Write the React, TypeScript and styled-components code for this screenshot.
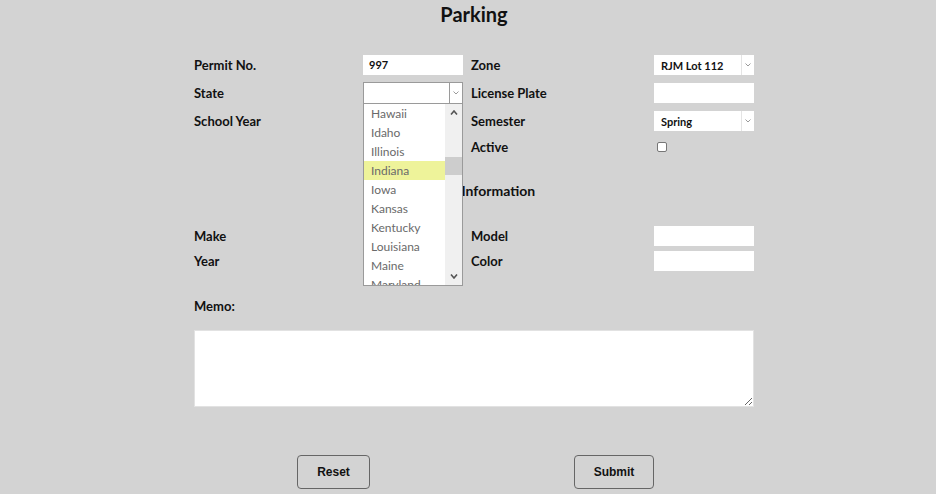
import React from "react";
import styled, { createGlobalStyle } from "styled-components";

const GlobalStyle = createGlobalStyle`
  html, body {
    margin: 0;
    padding: 0;
    background: #d3d3d3;
    font-family: "Lato", "Open Sans", sans-serif;
    color: #111;
  }
`;

const Page = styled.div`
  width: 936px;
  height: 494px;
  box-sizing: border-box;
  padding-left: 12px;
  display: flex;
  flex-direction: column;
  align-items: center;
  overflow: hidden;
`;

const Title = styled.h1`
  margin: 0;
  height: 28px;
  line-height: 28px;
  font-size: 20px;
  font-weight: 700;
`;

const Form = styled.div`
  width: 560px;
  margin-top: 23px;
  display: flex;
  flex-direction: column;
`;

const Row = styled.div<{ $h: number }>`
  display: grid;
  grid-template-columns: 169px 100px 8px 183px 100px;
  align-items: center;
  height: ${(p) => p.$h}px;
`;

const Label = styled.div`
  font-size: 13px;
  font-weight: 700;
  grid-column: ${(p: { $col?: number }) => p.$col ?? "auto"};
`;

const TextBox = styled.div`
  height: 20px;
  background: #fff;
  font-size: 11px;
  font-weight: 700;
  line-height: 20px;
  padding-left: 6px;
  box-sizing: border-box;
`;

const SelectWrap = styled.div`
  position: relative;
`;

const SelectBox = styled.div<{ $bordered?: boolean }>`
  display: flex;
  height: ${(p) => (p.$bordered ? 22 : 20)}px;
  background: #fff;
  box-sizing: border-box;
  border: ${(p) => (p.$bordered ? "1px solid #9a9a9a" : "none")};
  font-size: 11px;
  font-weight: 700;
`;

const SelectValue = styled.div`
  flex: 1;
  padding-left: 7px;
  display: flex;
  align-items: center;
`;

const SelectArrow = styled.div<{ $bordered?: boolean }>`
  width: 12px;
  border-left: 1px solid ${(p) => (p.$bordered ? "#9a9a9a" : "#e4e4e4")};
  display: flex;
  align-items: center;
  justify-content: center;
`;

const ListBox = styled.div`
  position: absolute;
  top: 100%;
  left: 0;
  width: 100px;
  height: 182px;
  box-sizing: border-box;
  border: 1px solid #9a9a9a;
  border-top: none;
  background: #fff;
  display: flex;
  overflow: hidden;
  z-index: 5;
`;

const Options = styled.div`
  flex: 1;
  display: flex;
  flex-direction: column;
`;

const Option = styled.div<{ $active?: boolean }>`
  height: 19px;
  flex: none;
  line-height: 19px;
  padding-left: 7px;
  font-size: 12px;
  color: #6a6a6a;
  background: ${(p) => (p.$active ? "#eef39a" : "transparent")};
`;

const ScrollBar = styled.div`
  width: 17px;
  background: #f0f0f0;
  display: flex;
  flex-direction: column;
  align-items: center;
`;

const ScrollBtn = styled.div`
  height: 17px;
  width: 17px;
  display: flex;
  align-items: center;
  justify-content: center;
`;

const Track = styled.div`
  flex: 1;
  width: 17px;
  position: relative;
`;

const Thumb = styled.div`
  position: absolute;
  left: 0;
  top: 36px;
  width: 17px;
  height: 18px;
  background: #cdcdcd;
`;

const CheckBox = styled.div`
  width: 10px;
  height: 10px;
  margin-left: 3px;
  background: #fff;
  border: 1px solid #767676;
  border-radius: 2px;
  box-sizing: border-box;
`;

const SectionTitle = styled.div`
  margin-top: 18px;
  height: 28px;
  line-height: 28px;
  text-align: center;
  font-size: 14px;
  font-weight: 700;
`;

const MemoLabel = styled.div`
  margin-top: 19px;
  height: 28px;
  line-height: 28px;
  font-size: 13px;
  font-weight: 700;
`;

const Memo = styled.textarea`
  margin-top: 10px;
  width: 560px;
  height: 77px;
  box-sizing: border-box;
  border: 1px solid #e2e2e2;
  background: #fff;
  resize: both;
  outline: none;
  display: block;
`;

const Buttons = styled.div`
  margin-top: 48px;
  display: flex;
  justify-content: space-between;
  padding: 0 100px 0 103px;
`;

const Button = styled.button<{ $w: number }>`
  width: ${(p) => p.$w}px;
  height: 34px;
  background: transparent;
  border: 1px solid #666;
  border-radius: 4px;
  font-family: "Liberation Sans", Arial, sans-serif;
  font-size: 12px;
  font-weight: 700;
  color: #111;
`;

const Chevron = ({ up }: { up?: boolean }) => (
  <svg width="8" height="5" viewBox="0 0 8 5">
    <path
      d={up ? "M1 4.5 L4 1 L7 4.5" : "M1 0.5 L4 4 L7 0.5"}
      fill="none"
      stroke="#555"
      strokeWidth="1.6"
    />
  </svg>
);

const SmallChevron = () => (
  <svg width="6" height="4" viewBox="0 0 6 4">
    <path d="M0.5 0.5 L3 3 L5.5 0.5" fill="none" stroke="#9a9a9a" strokeWidth="1" />
  </svg>
);

const states = [
  "Hawaii",
  "Idaho",
  "Illinois",
  "Indiana",
  "Iowa",
  "Kansas",
  "Kentucky",
  "Louisiana",
  "Maine",
  "Maryland",
];

const Select = ({ value, bordered, open }: { value: string; bordered?: boolean; open?: boolean }) => (
  <SelectWrap>
    <SelectBox $bordered={bordered}>
      <SelectValue>{value}</SelectValue>
      <SelectArrow $bordered={bordered}>
        <SmallChevron />
      </SelectArrow>
    </SelectBox>
    {open && (
      <ListBox>
        <Options>
          {states.map((s) => (
            <Option key={s} $active={s === "Indiana"}>
              {s}
            </Option>
          ))}
        </Options>
        <ScrollBar>
          <ScrollBtn>
            <Chevron up />
          </ScrollBtn>
          <Track>
            <Thumb />
          </Track>
          <ScrollBtn>
            <Chevron />
          </ScrollBtn>
        </ScrollBar>
      </ListBox>
    )}
  </SelectWrap>
);

const App = () => {
  return (
    <Page>
      <GlobalStyle />
      <Title>Parking</Title>
      <Form>
        <Row $h={28}>
          <Label>Permit No.</Label>
          <TextBox>997</TextBox>
          <span />
          <Label>Zone</Label>
          <Select value="RJM Lot 112" />
        </Row>
        <Row $h={28}>
          <Label>State</Label>
          <Select value="" bordered open />
          <span />
          <Label>License Plate</Label>
          <TextBox />
        </Row>
        <Row $h={28}>
          <Label>School Year</Label>
          <span />
          <span />
          <Label>Semester</Label>
          <Select value="Spring" />
        </Row>
        <Row $h={24}>
          <Label $col={4}>Active</Label>
          <CheckBox />
        </Row>
        <SectionTitle>Vehicle Information</SectionTitle>
        <Row $h={25} style={{ marginTop: 18 }}>
          <Label>Make</Label>
          <span />
          <span />
          <Label>Model</Label>
          <TextBox />
        </Row>
        <Row $h={25}>
          <Label>Year</Label>
          <span />
          <span />
          <Label>Color</Label>
          <TextBox />
        </Row>
        <MemoLabel>Memo:</MemoLabel>
        <Memo readOnly />
        <Buttons>
          <Button $w={73}>Reset</Button>
          <Button $w={80}>Submit</Button>
        </Buttons>
      </Form>
    </Page>
  );
};

export default App;
